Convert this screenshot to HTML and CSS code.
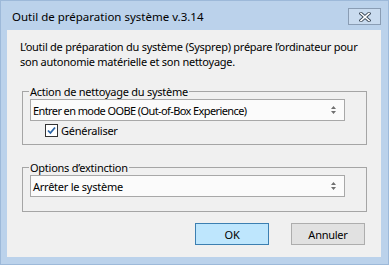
FILE: index.html
```html
<!DOCTYPE html>
<html lang="fr">
<head>
    <meta charset="UTF-8">
    <title>Outil de préparation système</title>
    <link rel="stylesheet" href="styles.css">
</head>
<body>
    <div class="window">
        <div class="titlebar">
            <span class="title">Outil de préparation système v.3.14</span>
            <button class="close-btn" aria-label="Fermer">
                <svg width="12" height="10" viewBox="0 0 12 10">
                    <path d="M2 1.5 L10 8.5 M10 1.5 L2 8.5" stroke="#3c4a5a" stroke-width="3.4" stroke-linecap="square"/>
                    <path d="M2 1.5 L10 8.5 M10 1.5 L2 8.5" stroke="#ffffff" stroke-width="1.6" stroke-linecap="square"/>
                </svg>
            </button>
        </div>

        <div class="client">
            <p class="intro">L’outil de préparation du système (Sysprep) prépare l’ordinateur pour<br>son autonomie matérielle et son nettoyage.</p>

            <fieldset class="group group-cleanup">
                <legend>Action de nettoyage du système</legend>
                <div class="combo">
                    <span class="combo-text-tight">Entrer en mode OOBE (Out-of-Box Experience)</span>
                    <svg class="combo-arrows" width="5" height="8" viewBox="0 0 5 8">
                        <path d="M2.5 0 L5 3 L0 3 Z M0 5 L5 5 L2.5 8 Z" fill="#707070"/>
                    </svg>
                </div>
                <label class="check">
                    <span class="check-box">
                        <svg width="11" height="11" viewBox="0 0 11 11">
                            <path d="M2 5.5 L4.4 8 L9 2.5" fill="none" stroke="#2a64a6" stroke-width="1.8"/>
                        </svg>
                    </span>
                    Généraliser
                </label>
            </fieldset>

            <fieldset class="group group-shutdown">
                <legend>Options d’extinction</legend>
                <div class="combo">
                    <span>Arrêter le système</span>
                    <svg class="combo-arrows" width="5" height="8" viewBox="0 0 5 8">
                        <path d="M2.5 0 L5 3 L0 3 Z M0 5 L5 5 L2.5 8 Z" fill="#707070"/>
                    </svg>
                </div>
            </fieldset>

            <div class="actions">
                <button class="btn btn-default">OK</button>
                <button class="btn">Annuler</button>
            </div>
        </div>
    </div>
</body>
</html>
```

FILE: styles.css
```css
/* Page */
body {
    margin: 0;
    font-family: "Noto Sans", "Open Sans", sans-serif;
    font-size: 11px;
    letter-spacing: -0.25px;
    color: #000;
}

/* Window frame */
.window {
    width: 389px;
    height: 265px;
    box-sizing: border-box;
    background-color: #bbd2eb;
    border: 1px solid #9db9d9;
    padding: 0 7px 7px 6px;
    display: flex;
    flex-direction: column;
}

.titlebar {
    height: 29px;
    display: flex;
    align-items: center;
    justify-content: space-between;
    padding-left: 5px;
}
.title {
    font-size: 11.5px;
    letter-spacing: 0;
    line-height: 15px;
    margin-top: 2px;
}
.close-btn {
    width: 33px;
    height: 17px;
    margin-top: 2px;
    margin-right: 0;
    padding: 0;
    border: 1px solid #8a9db4;
    background-color: #c9dbef;
    display: flex;
    align-items: center;
    justify-content: center;
}

/* Dialog body */
.client {
    flex: 1;
    background-color: #f0f0f0;
    padding: 9px 14px 0 15px;
}

.intro {
    margin: 0 0 0 -2px;
    line-height: 15px;
    white-space: nowrap;
}

/* Group boxes */
.group {
    margin: 15px 0 0 0;
    padding: 0 21px 6px 7px;
    border: 1px solid #a5a5a5;
    line-height: 15px;
}
.group legend {
    padding: 0 1px;
    margin-left: -1px;
}
.group-shutdown {
    padding-bottom: 14px;
}

.combo {
    height: 22px;
    box-sizing: border-box;
    border: 1px solid #a8a8a8;
    background-color: #fbfbfb;
    display: flex;
    align-items: center;
    justify-content: space-between;
    padding: 0 8px 0 2px;
}
.combo-text-tight {
    letter-spacing: -0.6px;
}

.check {
    display: flex;
    align-items: center;
    gap: 3px;
    margin: 2px 0 0 15px;
    height: 15px;
}
.check-box {
    width: 13px;
    height: 13px;
    box-sizing: border-box;
    border: 1px solid #333;
    background-color: #fff;
    display: flex;
    align-items: center;
    justify-content: center;
}

/* Buttons */
.actions {
    display: flex;
    justify-content: flex-end;
    gap: 22px;
    margin-top: 11px;
    padding-right: 2px;
}
.btn {
    width: 74px;
    height: 22px;
    font-family: inherit;
    font-size: 11px;
    letter-spacing: inherit;
    border: 1px solid #adadad;
    background-color: #e1e1e1;
    padding: 0;
}
.btn-default {
    border-color: #3c7fb1;
    background-color: #bee6fd;
}
```
